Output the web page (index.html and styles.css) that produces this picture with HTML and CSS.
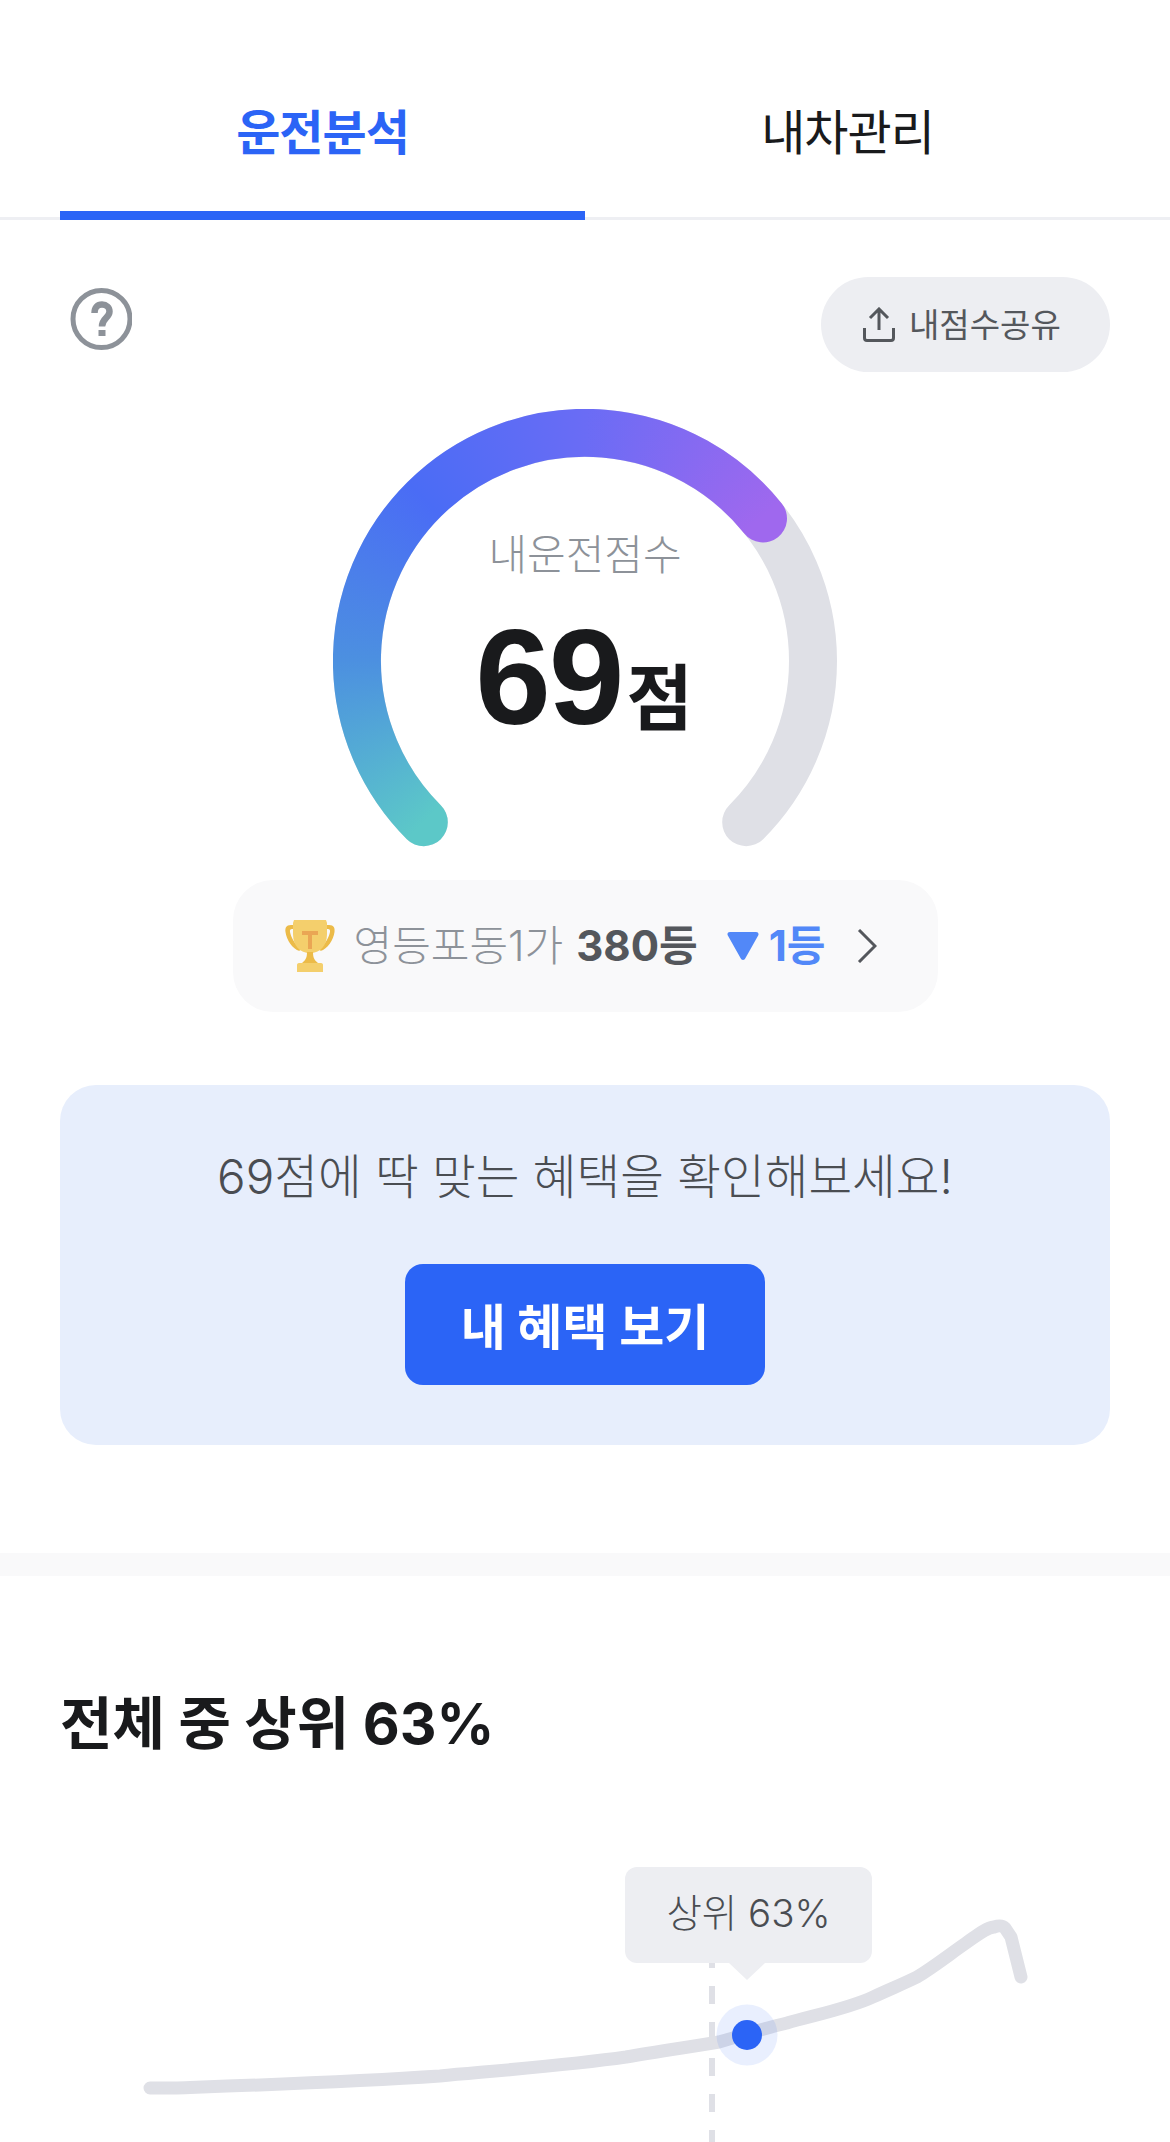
FILE: index.html
```html
<!DOCTYPE html>
<html lang="ko">
<head>
    <meta charset="UTF-8">
    <meta name="viewport" content="width=device-width, initial-scale=1.0">
    <title>운전분석</title>
    <link rel="stylesheet" href="styles.css">
</head>
<body>
    <nav class="tabs">
        <div class="tab active">운전분석</div>
        <div class="tab">내차관리</div>
    </nav>

    <div class="top-row">
        <svg class="help-icon" viewBox="0 0 62 62" fill="none" stroke="#8d9299" stroke-width="5">
            <circle cx="31.500" cy="31" r="28.500"/>
            <path d="M24.500 25c0-5.500 3-8.500 7.500-8.500s7.500 3 7.500 7c0 6.500-7.500 6.500-7.500 15" stroke-width="6.500"/>
            <rect x="28.500" y="42" width="7" height="6" fill="#8d9299" stroke="none"/>
        </svg>
        <button class="share-btn">
            <svg class="share-icon" viewBox="0 0 34 35" fill="none" stroke="#54575c" stroke-width="3">
                <path d="M17 23V2M8 11l9-9 9 9"/>
                <path d="M2.500 21v10c0 1.500 1 2.500 2.500 2.500h24c1.500 0 2.500-1 2.500-2.500V21"/>
            </svg>
            <span>내점수공유</span>
        </button>
    </div>

    <div class="gauge">
        <svg class="gauge-svg" viewBox="0 0 504 440" fill="none">
            <defs>
                <mask id="arcMask" maskUnits="userSpaceOnUse" x="0" y="0" width="504" height="440">
                    <path d="M90.800 413.200A228 228 0 1 1 430 109.500" stroke="#fff" stroke-width="48" stroke-linecap="round"/>
                </mask>
            </defs>
            <!-- background track -->
            <path d="M90.800 413.200A228 228 0 1 1 413.200 413.200" stroke="#dfe0e6" stroke-width="48" stroke-linecap="round"/>
            <foreignObject x="0" y="0" width="504" height="440" mask="url(#arcMask)">
                <div xmlns="http://www.w3.org/1999/xhtml" class="gauge-fill"></div>
            </foreignObject>
        </svg>
        <div class="gauge-label">내운전점수</div>
        <div class="gauge-score"><span class="num">69</span><span class="unit">점</span></div>
    </div>

    <div class="rank-pill">
        <svg class="trophy" viewBox="0 0 52 52">
            <path d="M11 5H7C2 5 1 8 1.500 12c1 8 7 17 14 19l1-3C11 25 7 17 6 12c-.4-2 .5-3 2-3h4z" fill="#ecbb48"/>
            <path d="M41 5h4c5 0 6 3 5.500 7-1 8-7 17-14 19l-1-3c5.500-3 9.500-11 10.500-16 .4-2-.5-3-2-3h-4z" fill="#ecbb48"/>
            <path d="M10 0h32l1 3v11c0 12-7 19-17 19S9 26 9 14V3z" fill="#f4cf6c"/>
            <path d="M18 11h16v4h-6v14h-4V15h-6z" fill="#eaa654"/>
            <path d="M23 32h6c0 5 1 8 5 11H18c4-3 5-6 5-11z" fill="#ecbb48"/>
            <path d="M15 43h22c1.500 0 2 1 2 2v7H13v-7c0-1 .5-2 2-2z" fill="#f4cf6c"/>
        </svg>
        <span class="rank-text rank-area">영등포동1가</span>
        <strong class="rank-text rank-num">380등</strong>
        <svg class="rank-arrow" viewBox="0 0 32 28"><path d="M3 0h26c2 0 3 1.500 2.300 3.300L18.500 26c-1 2.500-4 2.500-5 0L.7 3.300C0 1.500 1 0 3 0z" fill="#5288f8"/></svg>
        <strong class="rank-text rank-change">1등</strong>
        <svg class="chevron" viewBox="0 0 20 34" fill="none" stroke="#54575c" stroke-width="3"><path d="M2 1l16 16L2 33"/></svg>
    </div>

    <section class="benefit">
        <p class="benefit-text">69점에 딱 맞는 혜택을 확인해보세요!</p>
        <button class="benefit-btn">내 혜택 보기</button>
    </section>

    <div class="divider"></div>

    <section class="ranking">
        <h2>전체 중 상위 63%</h2>
        <div class="chart">
            <svg class="chart-svg" viewBox="0 0 1170 322" fill="none">
                <path d="M150 268L177 268C260 265 350 262 440 256C505 250 570 245 626 237C660 231 690 227 719 222C740 216 765 208 787 203C815 195 850 188 873 177C890 169 903 164 917 157C935 146 950 134 966 123C975 117 985 108 994 107C1000 105 1003 106 1005 108L1011 117L1021 157" stroke="#dfe0e6" stroke-width="13" stroke-linecap="round" stroke-linejoin="round"/>
                <line x1="712" y1="130" x2="712" y2="322" stroke="#dfe0e6" stroke-width="6" stroke-dasharray="18 18" stroke-dashoffset="0"/>
                <circle cx="747" cy="215" r="30.500" fill="#2b64f6" fill-opacity="0.1"/>
                <circle cx="747" cy="215" r="15" fill="#2b64f6"/>
            </svg>
            <div class="chart-tooltip">상위 63%</div>
        </div>
    </section>
</body>
</html>
```

FILE: styles.css
```css
* {
    margin: 0;
    padding: 0;
    box-sizing: border-box;
    font-family: Inter, 'Noto Sans CJK KR', sans-serif;
}

html, body {
    width: 1170px;
    height: 2142px;
    overflow: hidden;
    background: #fff;
}

/* Tabs */
.tabs {
    display: flex;
    height: 220px;
    padding: 0 60px;
    border-bottom: 3px solid #eeeff3;
}

.tab {
    flex: 1;
    height: 220px;
    padding-top: 100px;
    text-align: center;
    font-size: 48px;
    line-height: 66px;
    color: #191a1c;
    letter-spacing: -1px;
}

.tab.active {
    color: #2b64f6;
    font-weight: 700;
    border-bottom: 9px solid #2b64f6;
}

/* Help + share */
.top-row {
    display: flex;
    justify-content: space-between;
    align-items: flex-start;
    height: 95px;
    margin-top: 57px;
    padding: 0 60px 0 70px;
}

.help-icon {
    width: 62px;
    height: 62px;
    margin-top: 11px;
}

.share-btn {
    display: flex;
    align-items: center;
    gap: 13px;
    width: 289px;
    height: 95px;
    padding: 0 0 3px 41px;
    border: none;
    border-radius: 48px;
    background: #edeef2;
    color: #54575c;
    font-size: 33px;
}

.share-icon {
    width: 34px;
    height: 35px;
    margin-top: 3px;
}

/* Gauge */
.gauge {
    position: relative;
    width: 504px;
    height: 440px;
    margin: 37px auto 0;
}

.gauge-svg {
    display: block;
    width: 504px;
    height: 440px;
}

.gauge-fill {
    width: 504px;
    height: 504px;
    background: conic-gradient(from 225deg at 252px 252px,
        #5cc8c8 0deg,
        #4c90e0 45deg,
        #4a6cf5 90deg,
        #6a6cf5 135deg,
        #9f68ee 186deg,
        #9f68ee 210deg,
        #5cc8c8 300deg);
}

.gauge-label {
    position: absolute;
    top: 116px;
    left: 0;
    width: 100%;
    text-align: center;
    font-size: 42px;
    font-weight: 300;
    line-height: 60px;
    color: #8d9299;
}

.gauge-score {
    position: absolute;
    top: 193px;
    left: 0;
    width: 100%;
    display: flex;
    justify-content: center;
    align-items: baseline;
    gap: 4px;
    line-height: 150px;
    color: #191a1c;
    font-weight: 700;
    padding-right: 2px;
}

.gauge-score .num {
    font-family: 'Liberation Sans', sans-serif;
    font-size: 136px;
    letter-spacing: -2px;
}

.gauge-score .unit {
    font-size: 72px;
}

/* Rank pill */
.rank-pill {
    display: flex;
    align-items: center;
    width: 705px;
    height: 132px;
    margin: 31px auto 0;
    padding-left: 51px;
    border-radius: 40px;
    background: #f9f9fa;
    font-size: 42px;
}

.rank-text {
    margin-bottom: 8px;
}

.trophy {
    width: 52px;
    height: 52px;
    margin-right: 18px;
}

.rank-area {
    color: #8d9299;
    font-weight: 300;
}

.rank-num {
    margin-left: 13px;
    color: #54575c;
    font-weight: 700;
}

.rank-arrow {
    width: 32px;
    height: 28px;
    margin-left: 29px;
}

.rank-change {
    margin-left: 10px;
    color: #5288f8;
    font-weight: 700;
}

.chevron {
    width: 20px;
    height: 34px;
    margin-left: 32px;
}

/* Benefit banner */
.benefit {
    display: flex;
    flex-direction: column;
    align-items: center;
    height: 360px;
    margin: 73px 60px 0;
    padding-top: 59px;
    border-radius: 36px;
    background: #e7eefc;
}

.benefit-text {
    font-size: 47.500px;
    font-weight: 300;
    line-height: 66px;
    color: #4a4d52;
}

.benefit-btn {
    width: 360px;
    height: 121px;
    margin-top: 54px;
    padding-bottom: 3px;
    border: none;
    border-radius: 18px;
    background: #2b64f6;
    color: #fff;
    font-size: 49px;
    font-weight: 700;
}

.divider {
    height: 23px;
    margin-top: 108px;
    background: #f9f9fa;
}

/* Ranking */
.ranking {
    padding-top: 110px;
}

.ranking h2 {
    padding-left: 60px;
    font-size: 57px;
    line-height: 76px;
    color: #191a1c;
    font-weight: 700;
}

.chart {
    position: relative;
    height: 322px;
    margin-top: 58px;
}

.chart-svg {
    display: block;
    width: 1170px;
    height: 322px;
}

.chart-tooltip {
    position: absolute;
    left: 625px;
    top: 47px;
    width: 247px;
    height: 96px;
    border-radius: 12px;
    background: #edeef2;
    text-align: center;
    font-size: 38.500px;
    font-weight: 300;
    line-height: 92px;
    color: #4a4d52;
}

.chart-tooltip::after {
    content: "";
    position: absolute;
    left: 104px;
    top: 96px;
    border-left: 18px solid transparent;
    border-right: 18px solid transparent;
    border-top: 17px solid #edeef2;
}
```
